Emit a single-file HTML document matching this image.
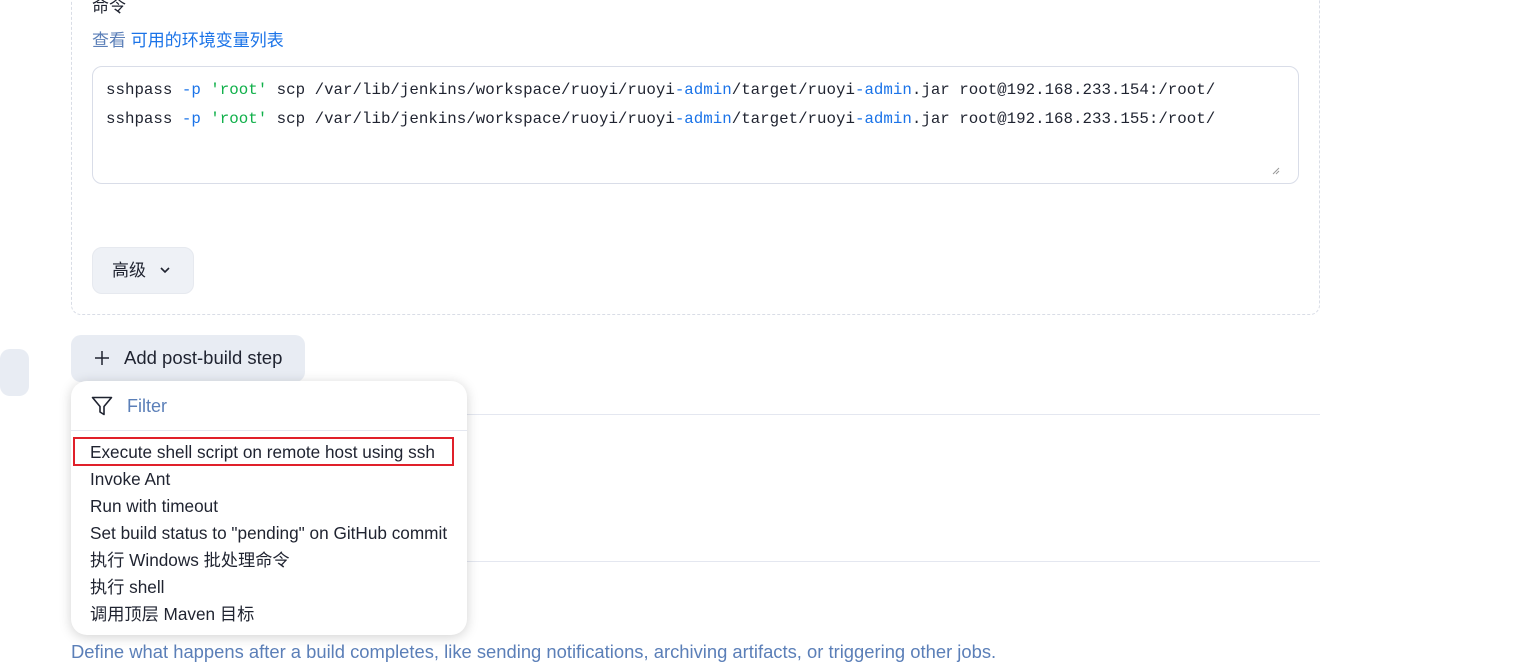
<!DOCTYPE html>
<html><head><meta charset="utf-8"><style>
*{box-sizing:border-box;margin:0;padding:0}
body{width:1527px;height:655px;overflow:hidden;background:#fff;font-family:"Liberation Sans","Noto Sans CJK SC",sans-serif;color:#1f2330;position:relative}
.abs{position:absolute;line-height:20px}
.panel{left:71px;top:-20px;width:1249px;height:335px;border:1px dashed #d9dde6;border-radius:10px}
.ta{left:92px;top:66px;width:1207px;height:118px;border:1px solid #d9dde8;border-radius:10px;background:#fff}
.code{left:106px;font-family:"Liberation Mono",monospace;font-size:15.8px;color:#1f2330;white-space:pre}
.b{color:#1a73e8}.g{color:#10b04a}
.btn{background:#eef1f6;border-radius:10px}
.line{height:1px;background:#e4e7f0}
.menu{left:71px;top:381px;width:396px;height:254px;background:#fff;border-radius:16px;box-shadow:0 2px 12px rgba(0,0,0,0.18)}
.it{position:absolute;left:19px;font-size:17.2px;line-height:20px;height:20px;color:#1f2330;white-space:nowrap}
</style></head><body>
<div class="abs panel"></div>
<div class="abs" style="left:92px;top:-3px;font-size:17px">命令</div>
<div class="abs" style="left:92px;top:31px;font-size:17px;color:#1a73e8"><span style="color:#5b7fb8">查看</span> 可用的环境变量列表</div>
<div class="abs ta"></div>
<div class="abs code" style="top:80px">sshpass <span class="b">-p</span> <span class="g">'root'</span> scp /var/lib/jenkins/workspace/ruoyi/ruoyi<span class="b">-admin</span>/target/ruoyi<span class="b">-admin</span>.jar root@192.168.233.154:/root/</div>
<div class="abs code" style="top:109px">sshpass <span class="b">-p</span> <span class="g">'root'</span> scp /var/lib/jenkins/workspace/ruoyi/ruoyi<span class="b">-admin</span>/target/ruoyi<span class="b">-admin</span>.jar root@192.168.233.155:/root/</div>
<svg class="abs" style="left:1272px;top:167px" width="8" height="8"><path d="M1 7L7 1M4 7L7 4" stroke="#999" stroke-width="1"/></svg>
<div class="abs btn" style="left:92px;top:247px;width:102px;height:47px;border:1px solid #e6e9ef"></div>
<div class="abs" style="left:112px;top:261px;font-size:17px">高级</div>
<svg class="abs" style="left:159px;top:265px" width="12" height="10"><path d="M2 3L6 7L10 3" stroke="#1f2330" stroke-width="1.6" fill="none"/></svg>
<div class="abs btn" style="left:0;top:349px;width:29px;height:47px;background:#e8ecf3"></div>
<div class="abs btn" style="left:71px;top:335px;width:234px;height:47px;background:#e8ecf3"></div>
<svg class="abs" style="left:94px;top:350px" width="16" height="16"><path d="M8 1V15M1 8H15" stroke="#1f2330" stroke-width="1.5"/></svg>
<div class="abs" style="left:124px;top:348px;font-size:18.5px">Add post-build step</div>
<div class="abs line" style="left:467px;top:414px;width:853px"></div>
<div class="abs line" style="left:467px;top:561px;width:853px"></div>
<div class="abs" style="left:71px;top:642px;font-size:18.4px;color:#5b7fb8;white-space:nowrap">Define what happens after a build completes, like sending notifications, archiving artifacts, or triggering other jobs.</div>
<div class="abs menu">
<svg class="abs" style="left:20px;top:15px" width="22" height="20"><path d="M1.5 1.5H20.5L13 10.5V18.5L9 16V10.5Z" stroke="#1f2330" stroke-width="1.6" fill="none" stroke-linejoin="round"/></svg>
<div class="it" style="left:56px;top:15px;font-size:18px;color:#5b7fb8">Filter</div>
<div class="abs line" style="left:0;top:49px;width:396px"></div>
<div class="abs" style="left:2px;top:56px;width:381px;height:29px;border:2px solid #e0202a"></div>
<div class="it" style="top:61px">Execute shell script on remote host using ssh</div>
<div class="it" style="top:88px">Invoke Ant</div>
<div class="it" style="top:115px">Run with timeout</div>
<div class="it" style="top:142px">Set build status to "pending" on GitHub commit</div>
<div class="it" style="top:169px">执行 Windows 批处理命令</div>
<div class="it" style="top:196px">执行 shell</div>
<div class="it" style="top:223px">调用顶层 Maven 目标</div>
</div>
</body></html>
